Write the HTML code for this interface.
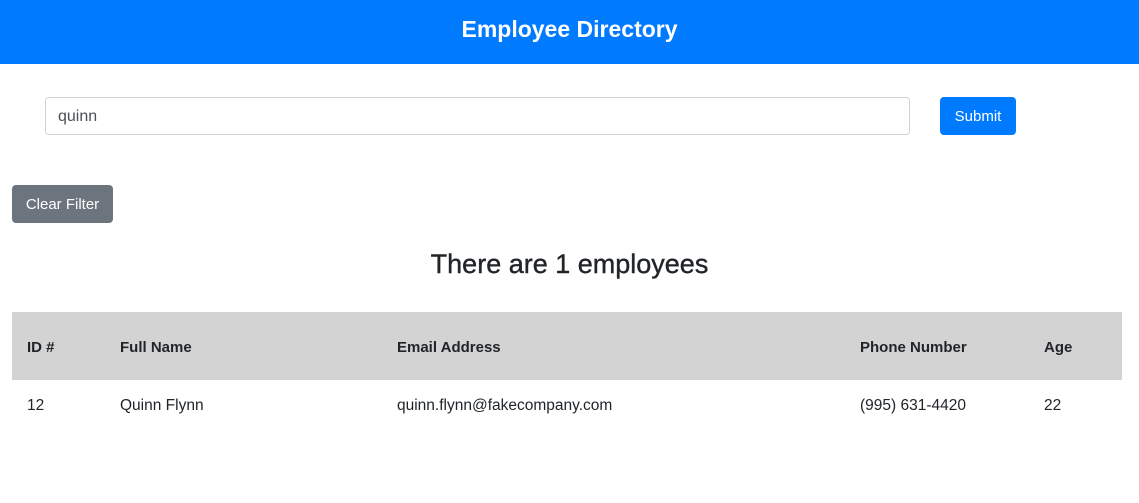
<!DOCTYPE html>
<html><head><meta charset="utf-8"><style>
body{margin:0;width:1139px;height:503px;background:#fff;font-family:"Liberation Sans",sans-serif;color:#212529;position:relative;overflow:hidden}
.hdr{position:absolute;left:0;top:0;width:1139px;height:64px;background:#007bff;color:#fff;font-weight:bold;font-size:23px;text-align:center;line-height:58px}
.inp{position:absolute;left:45px;top:97px;border:1px solid #ced4da;border-radius:4px;font-size:16px;line-height:38px;padding-left:12px;box-sizing:border-box;width:865px;height:38px;color:#495057}
.btn{position:absolute;color:#fff;font-size:15px;border-radius:4px;text-align:center;line-height:40px;height:38px}
.sub{left:940px;top:97px;width:76px;background:#007bff}
.clr{left:12px;top:185px;width:101px;background:#6c757d}
h2{position:absolute;left:0;width:1139px;top:246px;margin:0;text-align:center;font-size:27px;font-weight:normal;line-height:36px;-webkit-text-stroke:0.4px #212529}
.th{position:absolute;left:12px;top:312px;width:1110px;height:68px;background:#d3d3d3}
.c{position:absolute;font-size:16px}
.b{font-weight:bold;top:339px;font-size:15px}
.r{top:397px;font-size:15.5px}
</style></head><body>
<div class="hdr">Employee Directory</div>
<div class="inp">quinn</div>
<div class="btn sub">Submit</div>
<div class="btn clr">Clear Filter</div>
<h2>There are 1 employees</h2>
<div class="th"></div>
<div class="c b" style="left:27px">ID #</div>
<div class="c b" style="left:120px">Full Name</div>
<div class="c b" style="left:397px">Email Address</div>
<div class="c b" style="left:860px">Phone Number</div>
<div class="c b" style="left:1044px">Age</div>
<div class="c r" style="left:27px">12</div>
<div class="c r" style="left:120px">Quinn Flynn</div>
<div class="c r" style="left:397px">quinn.flynn@fakecompany.com</div>
<div class="c r" style="left:860px">(995) 631-4420</div>
<div class="c r" style="left:1044px">22</div>
</body></html>
